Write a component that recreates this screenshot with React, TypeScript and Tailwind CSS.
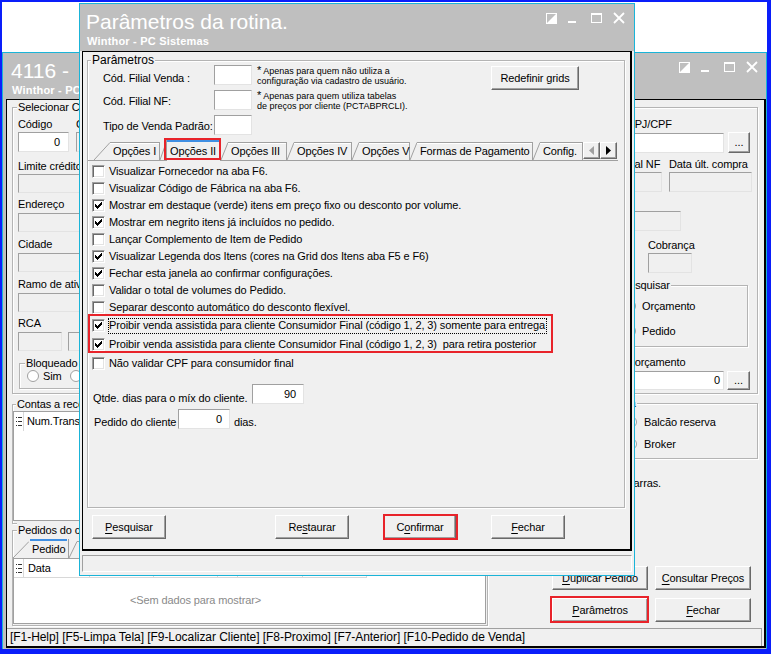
import React from "react";

type Kids = { className?: string; children?: React.ReactNode };

const Mn = ({ children }: Kids) => (
  <span className="underline decoration-1 underline-offset-[2px]">{children}</span>
);

function Sunken({ className = "", children }: Kids) {
  return (
    <div
      className={`flex shrink-0 items-center justify-end border border-t-[#a0a0a0] border-l-[#a0a0a0] border-r-[#e3e3e3] border-b-[#e3e3e3] ${className}`}
    >
      {children}
    </div>
  );
}

function Btn({ className = "", children }: Kids) {
  return (
    <div
      className={`flex shrink-0 items-center justify-center whitespace-nowrap border border-t-white border-l-white border-r-[#696969] border-b-[#696969] bg-[#f0f0f0] shadow-[inset_-1px_-1px_0_#a0a0a0] ${className}`}
    >
      {children}
    </div>
  );
}

function Check({ on }: { on?: boolean }) {
  return (
    <span className="flex h-[13px] w-[13px] shrink-0 items-center justify-center border border-t-[#a0a0a0] border-l-[#a0a0a0] border-r-white border-b-white bg-white shadow-[inset_1px_1px_0_#696969,inset_-1px_-1px_0_#e3e3e3]">
      {on && (
        <svg width="7" height="7" viewBox="0 0 7 7" shapeRendering="crispEdges">
          <path
            d="M0 2h1v3h-1z M1 3h1v3h-1z M2 4h1v3h-1z M3 3h1v3h-1z M4 2h1v3h-1z M5 1h1v3h-1z M6 0h1v3h-1z"
            fill="#000"
          />
        </svg>
      )}
    </span>
  );
}

function Radio() {
  return <span className="block h-[12px] w-[12px] shrink-0 rounded-full border border-[#a0a0a0] bg-white" />;
}

function RadioRow({ label, gap = "ml-[4px]" }: { label: string; gap?: string }) {
  return (
    <div className="flex h-[16px] items-center whitespace-nowrap">
      <Radio />
      <span className={gap}>{label}</span>
    </div>
  );
}

function Group({
  caption,
  className = "",
  cap = "left-[4px]",
  children,
}: Kids & { caption: string; cap?: string }) {
  return (
    <div
      className={`relative shrink-0 border border-[#b4b4b4] shadow-[inset_1px_1px_0_#fff,1px_1px_0_#fff] ${className}`}
    >
      <span className={`absolute top-[-8px] whitespace-nowrap bg-[#f0f0f0] px-[1px] leading-[14px] ${cap}`}>
        {caption}
      </span>
      {children}
    </div>
  );
}

function ListIcon() {
  return (
    <svg width="6" height="9" viewBox="0 0 6 9" shapeRendering="crispEdges">
      <path d="M0 0h1v1h-1z M2 0h4v1h-4z M0 4h1v1h-1z M2 4h4v1h-4z M0 8h1v1h-1z M2 8h4v1h-4z" fill="#333" />
    </svg>
  );
}

function WinCtl() {
  return (
    <div className="flex items-start">
      <svg width="11" height="11" viewBox="0 0 11 11" className="mt-[1px]">
        <rect x="0.5" y="0.5" width="10" height="10" fill="none" stroke="#fff" />
        <path d="M11 0V11H0Z" fill="#fff" />
      </svg>
      <svg width="8" height="3" viewBox="0 0 8 3" className="ml-[11px] mt-[9px]">
        <rect x="0" y="0" width="8" height="2" fill="#fff" />
      </svg>
      <svg width="11" height="10" viewBox="0 0 11 10" className="ml-[15px] mt-[1px]">
        <rect x="0.5" y="0.5" width="10" height="9" fill="none" stroke="#fff" />
        <rect x="0" y="0" width="11" height="2" fill="#fff" />
      </svg>
      <svg width="12" height="12" viewBox="0 0 12 12" className="ml-[11px]">
        <path d="M1 1L11 11M11 1L1 11" stroke="#fff" strokeWidth="1.8" />
      </svg>
    </div>
  );
}

function TitleBar({ title, sub, className = "" }: { title: string; sub: string; className?: string }) {
  return (
    <div className={`flex shrink-0 bg-[#bfbfbf] text-white ${className}`}>
      <div className="flex min-w-0 flex-col pt-[6px]">
        <div className="whitespace-nowrap text-[21px] leading-[24px] tracking-normal">{title}</div>
        <div className="ml-[1px] mt-[1px] whitespace-nowrap text-[11px] font-bold leading-[13px] tracking-[0.2px]">
          {sub}
        </div>
      </div>
      <div className="ml-auto mt-[8px]">
        <WinCtl />
      </div>
    </div>
  );
}

/* ---------- dialog: Parâmetros da rotina ---------- */

function Note({ lines }: { lines: string[] }) {
  return (
    <div className="ml-[5px] whitespace-nowrap text-[9px] leading-[10px] tracking-normal">
      <div>
        <span className="text-[11px] leading-[10px]">*</span>
        {lines[0]}
      </div>
      <div>{lines[1]}</div>
    </div>
  );
}

function FieldRow({ label, note, lift }: { label: string; note?: string[]; lift: string }) {
  return (
    <div className="flex h-[20px] items-center">
      <span className={`w-[111px] shrink-0 whitespace-nowrap ${lift}`}>{label}</span>
      <Sunken className="h-[20px] w-[38px] bg-white" />
      {note && <Note lines={note} />}
    </div>
  );
}

function Tab({ label, w, slant, sel }: { label: string; w: string; slant: number; sel?: boolean }) {
  if (sel) {
    return (
      <div className={`relative z-10 -mb-px flex h-[21px] shrink-0 ${w}`}>
        <svg width={slant} height="21" className="shrink-0">
          <line x1="0" y1="20" x2={slant} y2="3" stroke="#a0a0a0" />
        </svg>
        <div className="flex flex-1 flex-col border-x border-[#a0a0a0] bg-[#f0f0f0]">
          <div className="h-[2px] bg-[#3f8fe3]" />
          <div className="flex flex-1 items-center whitespace-nowrap pl-[3px]">{label}</div>
        </div>
        <span className="pointer-events-none absolute bottom-[1px] left-[4px] right-0 top-[-2px] border-2 border-[#e8232a]" />
      </div>
    );
  }
  return (
    <div className={`flex h-[18px] shrink-0 ${w}`}>
      <svg width={slant} height="18" className="shrink-0">
        <line x1="0" y1="18" x2={slant} y2="0.5" stroke="#a0a0a0" />
      </svg>
      <div className="flex flex-1 items-center whitespace-nowrap border-r border-t border-[#a0a0a0] pl-[3px] shadow-[inset_0_1px_0_#fff]">
        {label}
      </div>
    </div>
  );
}

const options: [string, boolean][] = [
  ["Visualizar Fornecedor na aba F6.", false],
  ["Visualizar Código de Fábrica na aba F6.", false],
  ["Mostrar em destaque (verde) itens em preço fixo ou desconto por volume.", true],
  ["Mostrar em negrito itens já incluídos no pedido.", true],
  ["Lançar Complemento de Item de Pedido", false],
  ["Visualizar Legenda dos Itens (cores na Grid dos Itens aba F5 e F6)", true],
  ["Fechar esta janela ao confirmar configurações.", true],
  ["Validar o total de volumes do Pedido.", false],
  ["Separar desconto automático do desconto flexível.", false],
];

function Dialog() {
  return (
    <div className="absolute left-[77px] top-[1px] flex h-[573px] w-[556px] flex-col border border-[#1ab4d8] bg-[#f0f0f0]">
      <TitleBar title="Parâmetros da rotina." sub="Winthor - PC Sistemas" className="h-[47px] pl-[6px] pr-[9px]" />
      <div className="flex flex-1 flex-col px-[2px] pb-[3px]">
        <div className="flex h-[500px] shrink-0 flex-col border-b-2 border-l border-r-2 border-t border-black">
          <Group
            caption="Parâmetros"
            className="ml-[4px] mt-[8px] h-[448px] w-[538px]"
            cap="left-[3px] text-[12px] tracking-normal"
          >
            <div className="flex pl-[15px] pt-[4px]">
              <div className="flex flex-col gap-[5px]">
                <FieldRow
                  label="Cód. Filial Venda :"
                  lift="mt-[6px]"
                  note={[" Apenas para quem não utiliza a", "configuração via cadastro de usuário."]}
                />
                <FieldRow
                  label="Cód. Filial NF:"
                  lift="mt-[2px]"
                  note={[" Apenas para quem utiliza tabelas", "de preços por cliente (PCTABPRCLI)."]}
                />
                <FieldRow label="Tipo de Venda Padrão:" lift="mt-[2px]" />
              </div>
              <Btn className="ml-auto mr-[45px] mt-[1px] h-[24px] w-[88px]">Redefinir grids</Btn>
            </div>

            <div className="mt-[5px] flex h-[21px] w-[530px] items-end border-b border-[#a0a0a0] pl-[6px]">
              <Tab label="Opções I" w="w-[66px]" slant={16} />
              <Tab label="Opções II" w="w-[61px]" slant={6} sel />
              <Tab label="Opções III" w="w-[66px]" slant={7} />
              <Tab label="Opções IV" w="w-[65px]" slant={7} />
              <Tab label="Opções V" w="w-[58px]" slant={7} />
              <Tab label="Formas de Pagamento" w="w-[123px]" slant={7} />
              <Tab label="Config." w="w-[50px]" slant={7} />
              <div className="mb-[1px] flex">
                <Btn className="h-[17px] w-[17px]">
                  <svg width="5" height="9" viewBox="0 0 5 9">
                    <path d="M5 0V9L0 4.5Z" fill="#a0a0a0" />
                  </svg>
                </Btn>
                <Btn className="h-[17px] w-[17px]">
                  <svg width="5" height="9" viewBox="0 0 5 9">
                    <path d="M0 0V9L5 4.5Z" fill="#000" />
                  </svg>
                </Btn>
              </div>
            </div>

            <div className="flex flex-col pl-[4px] pt-[2px]">
              {options.map(([t, on]) => (
                <div key={t} className="flex h-[17px] items-center whitespace-nowrap">
                  <Check on={on} />
                  <span className="ml-[4px]">{t}</span>
                </div>
              ))}
              <div className="relative">
                <div className="flex h-[19px] items-center whitespace-nowrap">
                  <Check on />
                  <span className="ml-[3px] flex h-[16px] items-center border border-dotted border-black pr-[1px]">
                    Proibir venda assistida para cliente Consumidor Final (código 1, 2, 3) somente para entrega
                  </span>
                </div>
                <div className="flex h-[19px] items-center whitespace-nowrap">
                  <Check on />
                  <span className="ml-[4px]">
                    {"Proibir venda assistida para cliente Consumidor Final (código 1, 2, 3)\u00a0 para retira posterior"}
                  </span>
                </div>
                <span className="pointer-events-none absolute bottom-[1px] left-[-4px] top-[-2px] w-[465px] border-2 border-[#e8232a]" />
              </div>
              <div className="flex h-[18px] items-center whitespace-nowrap">
                <Check />
                <span className="ml-[4px]">Não validar CPF para consumidor final</span>
              </div>

              <div className="mt-[12px] flex h-[20px] items-center">
                <span className="ml-[1px] mt-[8px] w-[159px] shrink-0 whitespace-nowrap">
                  Qtde. dias para o míx do cliente.
                </span>
                <Sunken className="h-[20px] w-[52px] bg-white pr-[7px]">90</Sunken>
              </div>
              <div className="mt-[5px] flex h-[20px] items-center">
                <span className="ml-[2px] mt-[7px] w-[84px] shrink-0 whitespace-nowrap">Pedido do cliente</span>
                <Sunken className="h-[20px] w-[52px] bg-white pr-[7px]">0</Sunken>
                <span className="ml-[4px] mt-[7px]">dias.</span>
              </div>
            </div>
          </Group>

          <div className="mt-[7px] flex">
            <Btn className="ml-[9px] h-[24px] w-[74px]">
              <Mn>P</Mn>esquisar
            </Btn>
            <Btn className="ml-[109px] h-[24px] w-[74px]">
              Re<Mn>s</Mn>taurar
            </Btn>
            <div className="relative ml-[35px]">
              <Btn className="h-[24px] w-[72px]">
                C<Mn>o</Mn>nfirmar
              </Btn>
              <span className="pointer-events-none absolute bottom-[-1px] left-[-1px] right-[-2px] top-[-1px] border-2 border-[#e8232a]" />
            </div>
            <Btn className="ml-[35px] h-[24px] w-[74px]">
              <Mn>F</Mn>echar
            </Btn>
          </div>
        </div>
        <div className="mt-[4px] h-[17px] border border-t-[#a0a0a0] border-l-[#a0a0a0] border-r-white border-b-white" />
      </div>
    </div>
  );
}

/* ---------- main window: 4116 ---------- */

function LeftFields() {
  return (
    <div className="flex w-[420px] shrink-0 flex-col pl-[5px] pt-[9px]">
      <div className="flex h-[14px] leading-[14px]">
        <div className="w-[58px]">Código</div>
        <div>Cliente</div>
      </div>
      <div className="mt-[1px] flex">
        <Sunken className="h-[20px] w-[51px] bg-white pr-[8px]">0</Sunken>
        <Sunken className="ml-[7px] h-[20px] w-[300px]" />
      </div>
      <div className="mt-[7px] h-[14px] leading-[14px]">Limite crédito</div>
      <Sunken className="mt-[1px] h-[19px] w-[140px]" />
      <div className="mt-[4px] h-[14px] leading-[14px]">Endereço</div>
      <Sunken className="mt-[2px] h-[19px] w-[380px]" />
      <div className="mt-[5px] h-[14px] leading-[14px]">Cidade</div>
      <Sunken className="mt-[2px] h-[19px] w-[250px]" />
      <div className="mt-[5px] h-[14px] leading-[14px]">Ramo de atividade</div>
      <Sunken className="mt-[2px] h-[19px] w-[300px]" />
      <div className="mt-[4px] h-[14px] leading-[14px]">RCA</div>
      <div className="mt-[2px] flex">
        <Sunken className="h-[19px] w-[44px]" />
        <Sunken className="ml-[6px] h-[19px] w-[250px]" />
      </div>
      <Group caption="Bloqueado" className="ml-[1px] mt-[12px] h-[26px] w-[120px]" cap="left-[5px]">
        <div className="flex h-full items-center pl-[7px]">
          <RadioRow label="Sim" gap="ml-[4px]" />
          <div className="ml-[8px]">
            <RadioRow label="Não" gap="ml-[4px]" />
          </div>
        </div>
      </Group>
    </div>
  );
}

function RightFields() {
  return (
    <div className="ml-auto flex w-[197px] shrink-0 flex-col pt-[9px]">
      <div className="h-[14px] whitespace-nowrap pl-[59px] leading-[14px]">CNPJ/CPF</div>
      <div className="mt-[1px] flex items-center">
        <Sunken className="ml-[40px] h-[20px] w-[124px] bg-white" />
        <Btn className="ml-[4px] h-[21px] w-[22px]">...</Btn>
      </div>
      <div className="mt-[4px] flex h-[14px] whitespace-nowrap leading-[14px]">
        <div className="w-[109px] shrink-0 pl-[61px]">Filial NF</div>
        <div>Data últ. compra</div>
      </div>
      <div className="mt-[1px] flex">
        <Sunken className="ml-[40px] h-[20px] w-[62px]" />
        <Sunken className="ml-[7px] h-[20px] w-[83px]" />
      </div>
      <div className="mt-[5px] h-[14px] pl-[40px] leading-[14px]">Praça</div>
      <Sunken className="ml-[40px] h-[20px] w-[81px]" />
      <div className="mt-[7px] h-[14px] pl-[88px] leading-[14px]">Cobrança</div>
      <Sunken className="ml-[88px] mt-[1px] h-[20px] w-[44px]" />
      <Group caption="Pesquisar" className="ml-[54px] mt-[12px] h-[62px] w-[134px]" cap="left-[6px]">
        <div className="flex flex-col gap-[9px] pl-[9px] pt-[12px]">
          <RadioRow label="Orçamento" gap="ml-[6px]" />
          <RadioRow label="Pedido" gap="ml-[6px]" />
        </div>
      </Group>
      <div className="mt-[8px] h-[14px] whitespace-nowrap pl-[60px] leading-[14px]">Nº orçamento</div>
      <div className="mt-[2px] flex items-center">
        <Sunken className="ml-[40px] h-[19px] w-[124px] bg-white pr-[3px]">0</Sunken>
        <Btn className="ml-[3px] h-[19px] w-[23px]">...</Btn>
      </div>
    </div>
  );
}

function GridHeaderCell({ className = "", children }: Kids) {
  return (
    <div className={`flex items-center border-b border-r border-[#d8d8d8] ${className}`}>{children}</div>
  );
}

function LowerLeft() {
  return (
    <div className="ml-[5px] flex w-[476px] shrink-0 flex-col">
      <Group caption="Contas a receber" className="mt-[10px] h-[120px]" cap="left-[3px]">
        <div className="mt-[6px] h-[110px] w-[473px] border border-[#a0a0a0] bg-white">
          <div className="flex h-[19px]">
            <GridHeaderCell className="w-[10px] justify-center border-b-0">
              <ListIcon />
            </GridHeaderCell>
            <div className="flex items-center pl-[3px]">Num.Trans</div>
          </div>
        </div>
      </Group>
      <Group caption="Pedidos do cliente" className="mt-[6px] h-[96px]" cap="left-[4px]">
        <div className="mt-[8px] flex h-[19px] items-end">
          <svg width="16" height="17" className="shrink-0">
            <line x1="0" y1="17" x2="16" y2="0.5" stroke="#a0a0a0" />
          </svg>
          <div className="flex h-[19px] w-[40px] shrink-0 flex-col border-r border-[#a0a0a0]">
            <div className="mx-[1px] h-[2px] bg-[#3f8fe3]" />
            <div className="flex flex-1 items-center pl-[3px]">Pedido</div>
          </div>
          <svg width="8" height="17" className="shrink-0">
            <line x1="0" y1="17" x2="8" y2="0.5" stroke="#a0a0a0" />
          </svg>
          <div className="flex h-[17px] items-center border-r border-t border-[#a0a0a0] px-[3px]">Itens do pedido</div>
        </div>
        <div className="flex h-[66px] w-[473px] flex-col border border-[#a0a0a0] bg-white">
          <div className="flex h-[19px] shrink-0">
            <GridHeaderCell className="w-[10px] justify-center">
              <ListIcon />
            </GridHeaderCell>
            <GridHeaderCell className="w-[66px] pl-[4px]">Data</GridHeaderCell>
            <GridHeaderCell className="w-[64px] pl-[4px]">Pedido</GridHeaderCell>
            <GridHeaderCell className="w-[64px] pl-[4px]">Valor</GridHeaderCell>
            <GridHeaderCell className="w-[20px]" />
            <GridHeaderCell className="w-[65px] pl-[4px]">Posição</GridHeaderCell>
            <GridHeaderCell className="w-[64px] pl-[4px]">RCA</GridHeaderCell>
          </div>
          <div className="flex flex-1 items-center pl-[116px] text-[#8a8a8a]">&lt;Sem dados para mostrar&gt;</div>
        </div>
      </Group>
    </div>
  );
}

function LowerRight() {
  return (
    <div className="ml-[12px] flex w-[258px] shrink-0 flex-col">
      <Group caption="Tipo de venda" className="ml-[60px] mt-[9px] h-[56px] w-[198px]" cap="left-[6px]">
        <div className="flex flex-col gap-[6px] pl-[64px] pt-[10px]">
          <RadioRow label="Balcão reserva" gap="ml-[7px]" />
          <RadioRow label="Broker" gap="ml-[7px]" />
        </div>
      </Group>
      <div className="mt-[17px] flex h-[14px] w-[161px] items-center justify-end whitespace-nowrap">
        Habilitar leitor de código de barras.
      </div>
      <div className="ml-[52px] mt-[76px] flex gap-[7px]">
        <Btn className="h-[24px] w-[96px]">
          <Mn>D</Mn>uplicar Pedido
        </Btn>
        <Btn className="h-[24px] w-[96px]">
          <Mn>C</Mn>onsultar Preços
        </Btn>
      </div>
      <div className="ml-[52px] mt-[8px] flex gap-[7px]">
        <div className="relative">
          <Btn className="h-[24px] w-[96px]">
            <Mn>P</Mn>arâmetros
          </Btn>
          <span className="pointer-events-none absolute bottom-[-1px] left-[-2px] right-[-1px] top-[-2px] border-2 border-[#e8232a]" />
        </div>
        <Btn className="h-[24px] w-[96px]">
          <Mn>F</Mn>echar
        </Btn>
      </div>
    </div>
  );
}

function MainWindow() {
  return (
    <div className="flex h-[597px] shrink-0 flex-col border-x border-t border-[#1ab4d8] bg-[#bfbfbf]">
      <TitleBar title="4116 -" sub="Winthor - PC Sistemas" className="h-[46px] pl-[8px] pr-[8px]" />
      <div className="flex flex-1 flex-col pb-[1px] pl-[3px]">
        <div className="flex flex-1 flex-col border-b-2 border-l border-r-2 border-t border-black bg-[#f0f0f0]">
          <Group caption="Selecionar Cliente" className="ml-[5px] mt-[7px] h-[287px] w-[746px]" cap="left-[4px]">
            <div className="flex">
              <LeftFields />
              <RightFields />
            </div>
          </Group>
          <div className="flex">
            <LowerLeft />
            <LowerRight />
          </div>
          <div className="mr-[2px] mt-auto flex h-[18px] items-center whitespace-nowrap border-r border-t border-[#a0a0a0] pl-[3px] text-[12px] tracking-[-0.05px]">
            [F1-Help] [F5-Limpa Tela] [F9-Localizar Cliente] [F8-Proximo] [F7-Anterior] [F10-Pedido de Venda]
          </div>
        </div>
      </div>
    </div>
  );
}

export default function App() {
  return (
    <div className="relative flex h-[654px] w-[771px] flex-col overflow-hidden border-b-[5px] border-l-2 border-r-4 border-t-2 border-[#0a1efa] bg-white font-['Liberation_Sans',Arial,sans-serif] text-[11px] leading-[13px] tracking-[-0.12px] text-black">
      <div className="h-[50px] shrink-0" />
      <MainWindow />
      <Dialog />
    </div>
  );
}
